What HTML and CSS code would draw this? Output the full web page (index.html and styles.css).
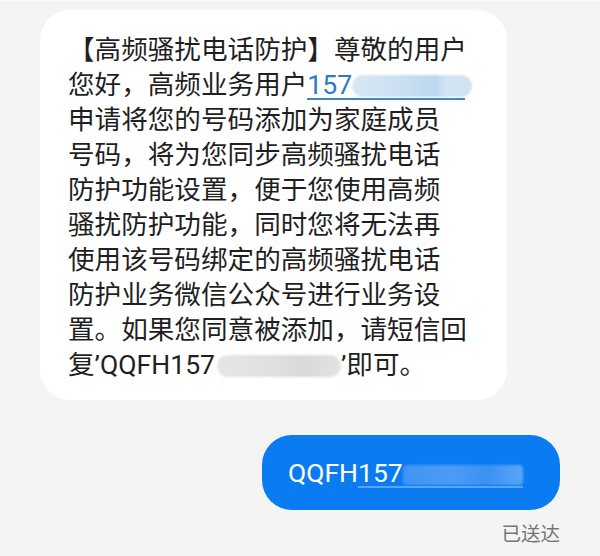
FILE: index.html
```html
<!DOCTYPE html>
<html lang="zh-CN">
<head>
<meta charset="utf-8">
<link rel="stylesheet" href="styles.css">
</head>
<body>
<div class="chat">
  <div class="bubble in">
    <p class="msg">
      <span class="line">【高频骚扰电话防护】尊敬的用户</span>
      <span class="line">您好，高频业务用户<span class="link">157<span class="blob blob-blue"></span></span></span>
      <span class="line">申请将您的号码添加为家庭成员</span>
      <span class="line">号码，将为您同步高频骚扰电话</span>
      <span class="line">防护功能设置，便于您使用高频</span>
      <span class="line">骚扰防护功能，同时您将无法再</span>
      <span class="line">使用该号码绑定的高频骚扰电话</span>
      <span class="line">防护业务微信公众号进行业务设</span>
      <span class="line">置。如果您同意被添加，请短信回</span>
      <span class="line">复’QQFH157<span class="blob blob-gray"></span>’即可。</span>
    </p>
  </div>
  <div class="bubble out">
    <span class="out-text">QQFH<span class="out-link">157<span class="blob blob-light"></span></span></span>
  </div>
  <div class="status">已送达</div>
</div>
</body>
</html>
```

FILE: styles.css
```css
html, body {
  margin: 0;
  padding: 0;
}
body {
  background: #f4f4f4;
  font-family: Roboto, "Noto Sans CJK SC", "Noto Sans", sans-serif;
  width: 600px;
  height: 556px;
  overflow: hidden;
  border-top: 1px solid #fbfbfb;
  box-sizing: border-box;
}
.chat {
  display: flex;
  flex-direction: column;
  padding-top: 9px;
}
.bubble.in {
  margin-left: 40px;
  width: 467px;
  box-sizing: border-box;
  background: #ffffff;
  border-radius: 30px;
  padding: 22px 10px 18px 28px;
}
.msg {
  margin: 0;
  font-size: 26.6px;
  line-height: 35px;
  color: #1f1f1f;
}
.line {
  display: block;
  white-space: nowrap;
}
.link {
  display: inline-block;
  color: #2b7bc4;
  line-height: 27px;
  border-bottom: 2px solid #3b86c8;
}
.blob {
  display: inline-block;
  vertical-align: -3px;
  border-radius: 12px;
  filter: blur(1px);
}
.blob-blue {
  width: 120px;
  height: 22px;
  margin-right: -7px;
  background: linear-gradient(90deg, #d8e7f4 0%, #cde1f2 35%, #bcd6ee 70%, #d3e4f3 78%, #cfe2f2 100%);
}
.blob-gray {
  width: 124px;
  height: 22px;
  margin-left: 2px;
  background: linear-gradient(90deg, #e6e6e6 0%, #e1e1e1 40%, #d9d9d9 70%, #e3e3e3 100%);
}
.bubble.out {
  align-self: flex-end;
  margin-right: 40px;
  margin-top: 35px;
  width: 298px;
  height: 75px;
  box-sizing: border-box;
  background: #0b7bf2;
  border-radius: 30px;
  padding-left: 26px;
  display: flex;
  align-items: center;
}
.out-text {
  color: #ffffff;
  font-size: 26.5px;
  line-height: 30px;
}
.out-link {
  display: inline-block;
  border-bottom: 2px solid #5aa5f7;
  line-height: 27px;
}
.blob-light {
  width: 120px;
  height: 20px;
  border-radius: 4px;
  filter: blur(1px);
  background: linear-gradient(90deg, #3f94f4 0%, #4b9cf5 40%, #3a91f3 70%, #5aa6f6 100%);
}
.status {
  align-self: flex-end;
  margin-right: 40px;
  margin-top: 8px;
  font-size: 19.5px;
  color: #767676;
  font-family: "Noto Sans CJK SC", sans-serif;
}
```
